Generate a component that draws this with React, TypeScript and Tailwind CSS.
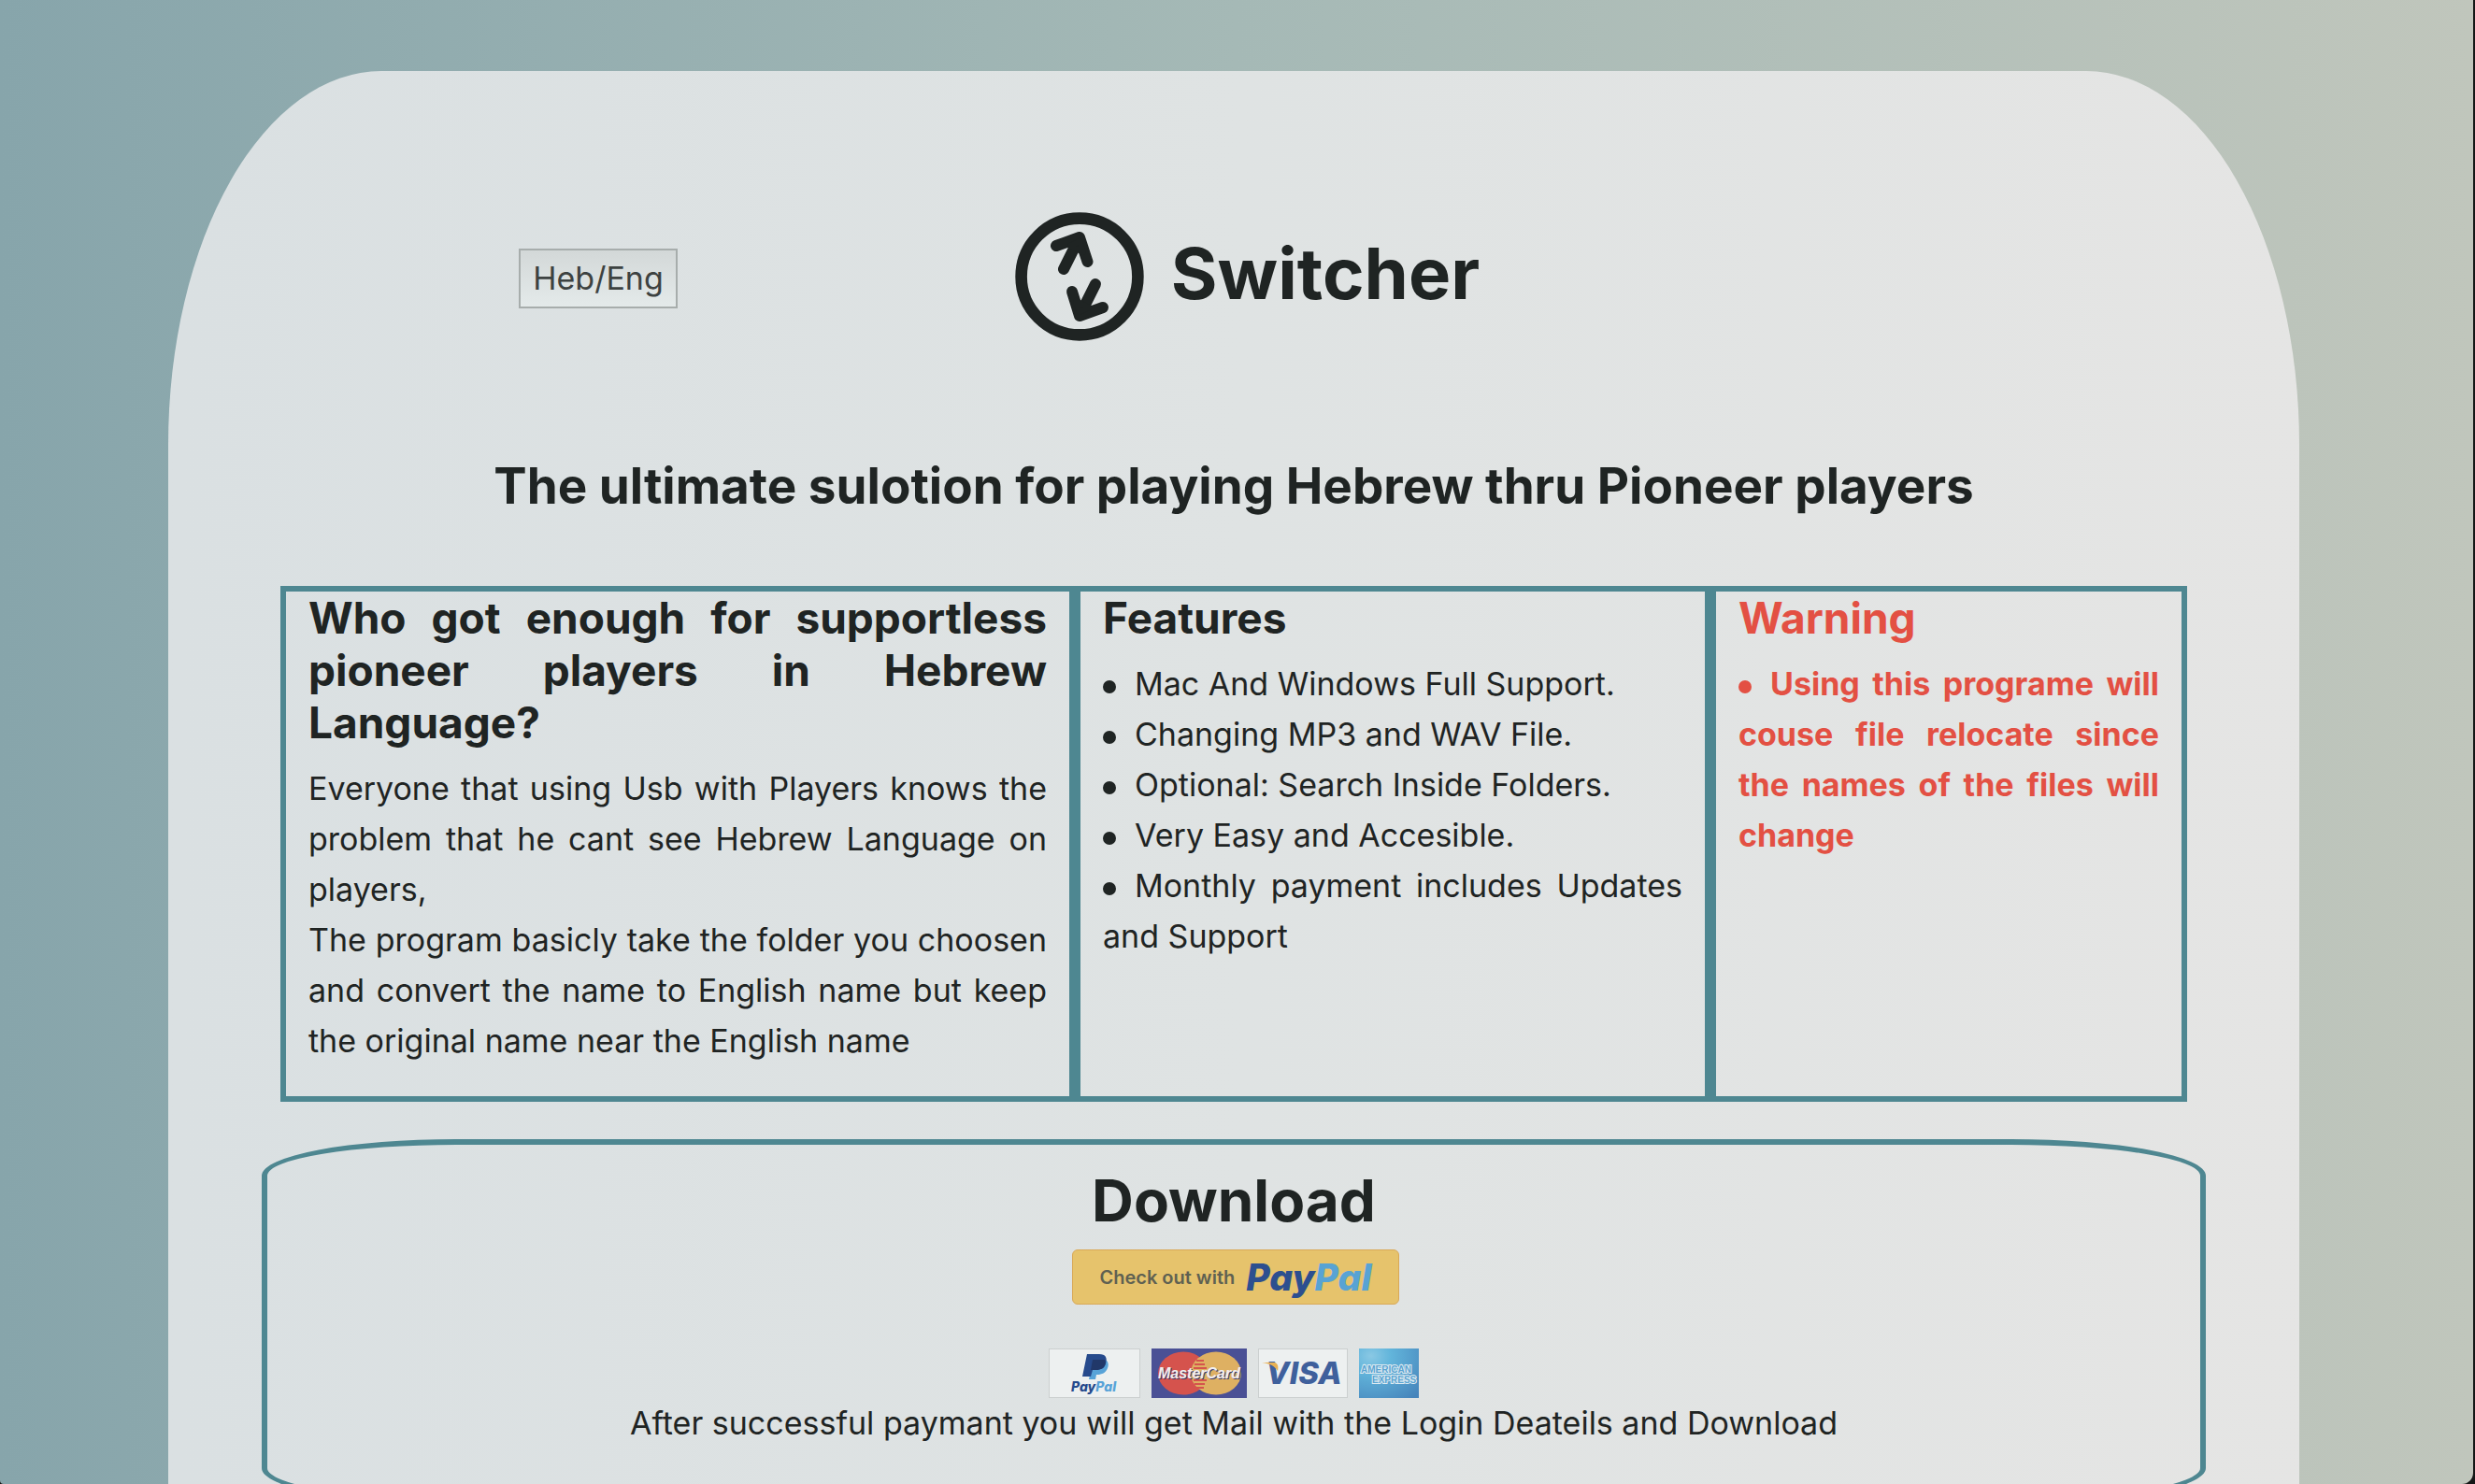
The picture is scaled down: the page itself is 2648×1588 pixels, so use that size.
import type { ReactNode } from "react";

function Logo() {
  return (
    <svg viewBox="0 0 196 196" className="size-[196px] shrink-0" role="img" aria-label="Switcher logo">
      <g fill="none" stroke="#1f2423" strokeLinecap="round" strokeLinejoin="round">
        <circle cx="98" cy="98" r="62.4" strokeWidth="12.6" />
        <g strokeWidth="12">
          <path d="M81 90 L98 56 M73 65 L98 56 L106.500 82" />
          <path d="M115 106 L98 140 M90 114 L98 140 L123 131" />
          <path d="M88 65 L98 60 L102 72 Z M94 124 L98 136 L108 131 Z" fill="#1f2423" strokeWidth="6" />
        </g>
      </g>
    </svg>
  );
}

function Panel({ title, className, children }: { title: string; className: string; children: ReactNode }) {
  return (
    <section className={`border-6 border-[#4e8791] px-6 pb-8 text-justify ${className}`}>
      <h3 className="mb-4 text-[46px] leading-[56px] font-bold">{title}</h3>
      {children}
    </section>
  );
}

function Bullet({ children }: { children: ReactNode }) {
  return (
    <li className="before:mr-5 before:inline-block before:size-3.5 before:rounded-full before:bg-current before:align-middle">
      {children}
    </li>
  );
}

const features = [
  "Mac And Windows Full Support.",
  "Changing MP3 and WAV File.",
  "Optional: Search Inside Folders.",
  "Very Easy and Accesible.",
  "Monthly payment includes Updates and Support",
];

function PayPalCard() {
  return (
    <svg viewBox="0 0 98 53" className="h-[53px] w-[98px]" role="img" aria-label="PayPal">
      <rect x="0.5" y="0.5" width="97" height="52" fill="#edf0f0" stroke="#cbcfcf" />
      <path d="M58 11c5 1 7 5 5 10-2 5-6 7-11 7h-1l-1 5h-7l2-9z" fill="#58a3d8" />
      <path d="M41 6h13c7 0 9 4 7 10-1 5-5 7-11 7h-3l-2 7h-9z" fill="#264a8c" />
      <path d="M47 12h13l1 3c-1 6-5 8-11 8h-5z" fill="#213869" />
      <text x="48" y="46" textAnchor="middle" fontFamily="Inter, sans-serif" fontSize="14" fontWeight="800" fontStyle="italic">
        <tspan fill="#264a8c">Pay</tspan>
        <tspan fill="#58a3d8">Pal</tspan>
      </text>
    </svg>
  );
}

function MasterCard() {
  return (
    <svg viewBox="0 0 102 53" className="h-[53px] w-[102px]" role="img" aria-label="MasterCard">
      <rect width="102" height="53" fill="#4a5095" />
      <ellipse cx="34" cy="26.500" rx="27" ry="23" fill="#d5534d" />
      <ellipse cx="69" cy="26.500" rx="27" ry="23" fill="#deb062" />
      <path d="M48 13h8M46 17h11M45 21h14M45 34h14M46 38h11M48 42h8" stroke="#d5534d" strokeWidth="2" />
      <text x="52" y="33" textAnchor="middle" fontFamily="Liberation Sans, sans-serif" fontSize="16" fontWeight="700" fontStyle="italic" fill="#3a3a6a">
        MasterCard
      </text>
      <text x="51" y="32" textAnchor="middle" fontFamily="Liberation Sans, sans-serif" fontSize="16" fontWeight="700" fontStyle="italic" fill="#f1efef">
        MasterCard
      </text>
    </svg>
  );
}

function VisaCard() {
  return (
    <svg viewBox="0 0 96 53" className="h-[53px] w-[96px]" role="img" aria-label="Visa">
      <rect x="0.5" y="0.5" width="95" height="52" fill="#edf0f0" stroke="#cbcfcf" />
      <text x="49" y="38" textAnchor="middle" fontFamily="Inter, sans-serif" fontSize="33" fontWeight="800" fontStyle="italic" fill="#3f609c">
        VISA
      </text>
      <path d="M4 15h14c3 1 4 4 3 9-3-5-8-8-17-9z" fill="#e8b154" />
    </svg>
  );
}

function AmexCard() {
  return (
    <svg viewBox="0 0 64 53" className="h-[53px] w-[64px]" role="img" aria-label="American Express">
      <defs>
        <radialGradient id="amex" cx="0.2" cy="0.15" r="1.1">
          <stop offset="0" stopColor="#8ac8e4" />
          <stop offset="0.3" stopColor="#62b5db" />
          <stop offset="1" stopColor="#4684bb" />
        </radialGradient>
      </defs>
      <rect width="64" height="53" fill="url(#amex)" />
      <g fontFamily="Liberation Sans, sans-serif" fontSize="10" fontWeight="700" fill="#5aa4d2" stroke="#dfebf1" strokeWidth="2" paintOrder="stroke">
        <text x="2" y="26">AMERICAN</text>
        <text x="14" y="37">EXPRESS</text>
      </g>
    </svg>
  );
}

export default function App() {
  return (
    <div className="h-screen overflow-hidden bg-[#141716] pr-0.5 font-['Inter',sans-serif] text-[#1f2423]">
      <div className="h-full overflow-hidden rounded-br-xl rounded-bl-sm bg-linear-to-r from-[#87a5ab] via-[#a5b9b6] to-[#c0c6bc] pt-19 pr-[186px] pl-[180px]">
        <main className="bg-linear-to-r from-[#dae0e2] via-[#dfe3e3] to-[#e5e5e4] pb-100 [border-radius:10%_10%_0_0/400px_400px_0_0]">
          <header className="mx-30 grid grid-cols-3 items-center pt-[122px]">
            <button
              type="button"
              className="mt-1 h-16 w-[170px] justify-self-center border-2 border-[#a7adac] bg-linear-to-b from-[#d3d8d8] to-[#e4eaea] text-[34px] leading-none text-[#3d4241]"
            >
              Heb/Eng
            </button>
            <div className="flex items-center justify-self-center">
              <Logo />
              <h1 className="pb-2 text-[76px] leading-24 font-bold">Switcher</h1>
            </div>
          </header>

          <h2 className="mt-[92px] text-center text-[53px] leading-[68px] font-bold">
            The ultimate sulotion for playing Hebrew thru Pioneer players
          </h2>

          <div className="mx-30 mt-[73px] grid min-h-[552px] grid-cols-12 text-[34px] leading-[54px]">
            <Panel title="Who got enough for supportless pioneer players in Hebrew Language?" className="col-span-5">
              <p>
                Everyone that using Usb with Players knows the problem that he cant see Hebrew Language on players,
                <br />
                The program basicly take the folder you choosen and convert the name to English name but keep the
                original name near the English name
              </p>
            </Panel>
            <Panel title="Features" className="col-span-4">
              <ul>
                {features.map((feature) => (
                  <Bullet key={feature}>{feature}</Bullet>
                ))}
              </ul>
            </Panel>
            <Panel title="Warning" className="col-span-3 text-[#e35043]">
              <ul className="font-bold">
                <Bullet>Using this programe will couse file relocate since the names of the files will change</Bullet>
              </ul>
            </Panel>
          </div>

          <section className="mx-25 mt-10 flex h-[391px] flex-col items-center rounded-[10%] border-6 border-[#4e8791] pt-5">
            <h2 className="text-[62px] leading-20 font-bold">Download</h2>
            <button
              type="button"
              className="mt-3 ml-1 flex h-[59px] w-[350px] items-center justify-center gap-3 rounded-md border border-[#d9a857] bg-[#e6c36c]"
            >
              <span className="text-[20px] font-semibold text-[#5f6152]">Check out with</span>
              <span className="text-[39px] leading-none font-extrabold text-[#2d4f8f] italic">
                Pay<span className="text-[#58a3d4]">Pal</span>
              </span>
            </button>
            <div className="mt-[47px] flex gap-3">
              <PayPalCard />
              <MasterCard />
              <VisaCard />
              <AmexCard />
            </div>
            <p className="text-[34px] leading-[54px]">
              After successful paymant you will get Mail with the Login Deateils and Download
            </p>
          </section>
        </main>
      </div>
    </div>
  );
}
